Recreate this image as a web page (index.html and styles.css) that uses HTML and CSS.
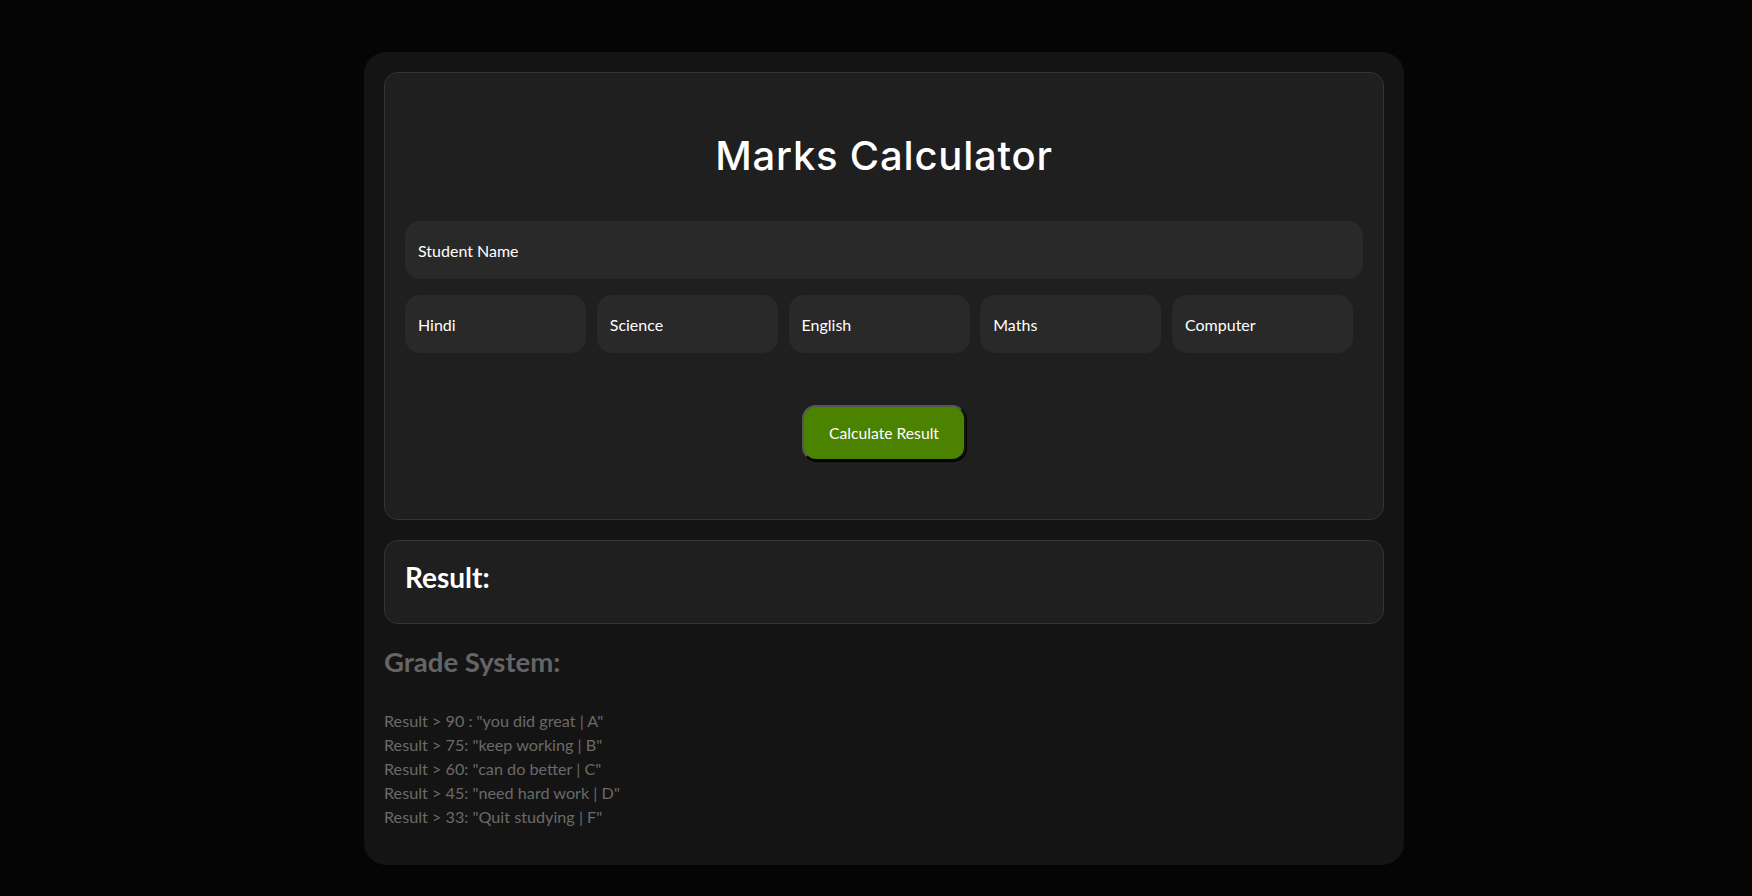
FILE: index.html
```html
<!DOCTYPE html>
<html lang="en">
<head>
<meta charset="utf-8">
<title>Marks Calculator</title>
<link rel="stylesheet" href="styles.css">
</head>
<body>
<div class="page">
  <main class="container">
    <section class="card calc">
      <h1 class="title">Marks Calculator</h1>
      <input class="field field-name" type="text" placeholder="Student Name">
      <div class="subjects">
        <input class="field" type="number" placeholder="Hindi">
        <input class="field" type="number" placeholder="Science">
        <input class="field" type="number" placeholder="English">
        <input class="field" type="number" placeholder="Maths">
        <input class="field" type="number" placeholder="Computer">
      </div>
      <div class="actions">
        <button class="btn" type="button">Calculate Result</button>
      </div>
    </section>
    <section class="card result">
      <h2 class="result-title">Result:</h2>
    </section>
    <h2 class="grade-title">Grade System:</h2>
    <div class="grades">
      <div>Result &gt; 90 : "you did great | A"</div>
      <div>Result &gt; 75: "keep working | B"</div>
      <div>Result &gt; 60: "can do better | C"</div>
      <div>Result &gt; 45: "need hard work | D"</div>
      <div>Result &gt; 33: "Quit studying | F"</div>
    </div>
  </main>
</div>
</body>
</html>
```
FILE: styles.css
```css
* { box-sizing: border-box; }

html, body {
  margin: 0;
  background: #050505;
}

body {
  font-family: "Lato", "Open Sans", sans-serif;
  color: #fff;
}

.page {
  display: flex;
  justify-content: center;
  padding: 52px 0 31px 16px;
}

.container {
  width: 1040px;
  background: #141414;
  border-radius: 22px;
  padding: 20px 20px 36px;
}

.card {
  background: #1f1f1f;
  border: 1px solid #353535;
  border-radius: 14px;
  padding: 20px;
}

.title {
  margin: 39px 0 41px;
  font-family: "Inter", "Lato", sans-serif;
  font-weight: 500;
  font-size: 40px;
  line-height: 48px;
  letter-spacing: 0.8px;
  text-align: center;
  color: #fff;
}

.field {
  display: block;
  height: 58px;
  border: none;
  outline: none;
  border-radius: 15px;
  background: #292929;
  color: #fff;
  font-family: "Lato", sans-serif;
  font-size: 16px;
  padding: 0 13px;
  -moz-appearance: textfield;
  appearance: textfield;
}

.field::placeholder {
  color: #fff;
  opacity: 1;
}

.field::-webkit-outer-spin-button,
.field::-webkit-inner-spin-button {
  -webkit-appearance: none;
  margin: 0;
}

.field-name {
  width: 100%;
}

.subjects {
  display: grid;
  grid-template-columns: repeat(5, 181px);
  column-gap: 10.75px;
  margin-top: 16px;
}

.subjects .field {
  width: 181px;
}

.actions {
  display: flex;
  justify-content: center;
  margin: 52px 0 38px;
}

.btn {
  width: 164px;
  height: 56px;
  border: 2px solid;
  border-color: #565656 #151515 #050505 #565656;
  border-radius: 14px;
  background: #4b8200;
  color: #fff;
  font-family: "Lato", sans-serif;
  font-size: 15.7px;
  cursor: pointer;
  box-shadow: 1px 1px 0 #000;
}

.result {
  margin-top: 20px;
  padding-bottom: 28px;
}

.result-title {
  margin: 0;
  font-size: 28px;
  font-weight: 700;
  line-height: 1.2;
  color: #fff;
}

.grade-title {
  margin: 21px 0 31px;
  font-size: 27.5px;
  font-weight: 700;
  line-height: 1.2;
  color: #656565;
}

.grades {
  font-size: 16.2px;
  line-height: 24px;
  color: #6a6a6a;
}
```
